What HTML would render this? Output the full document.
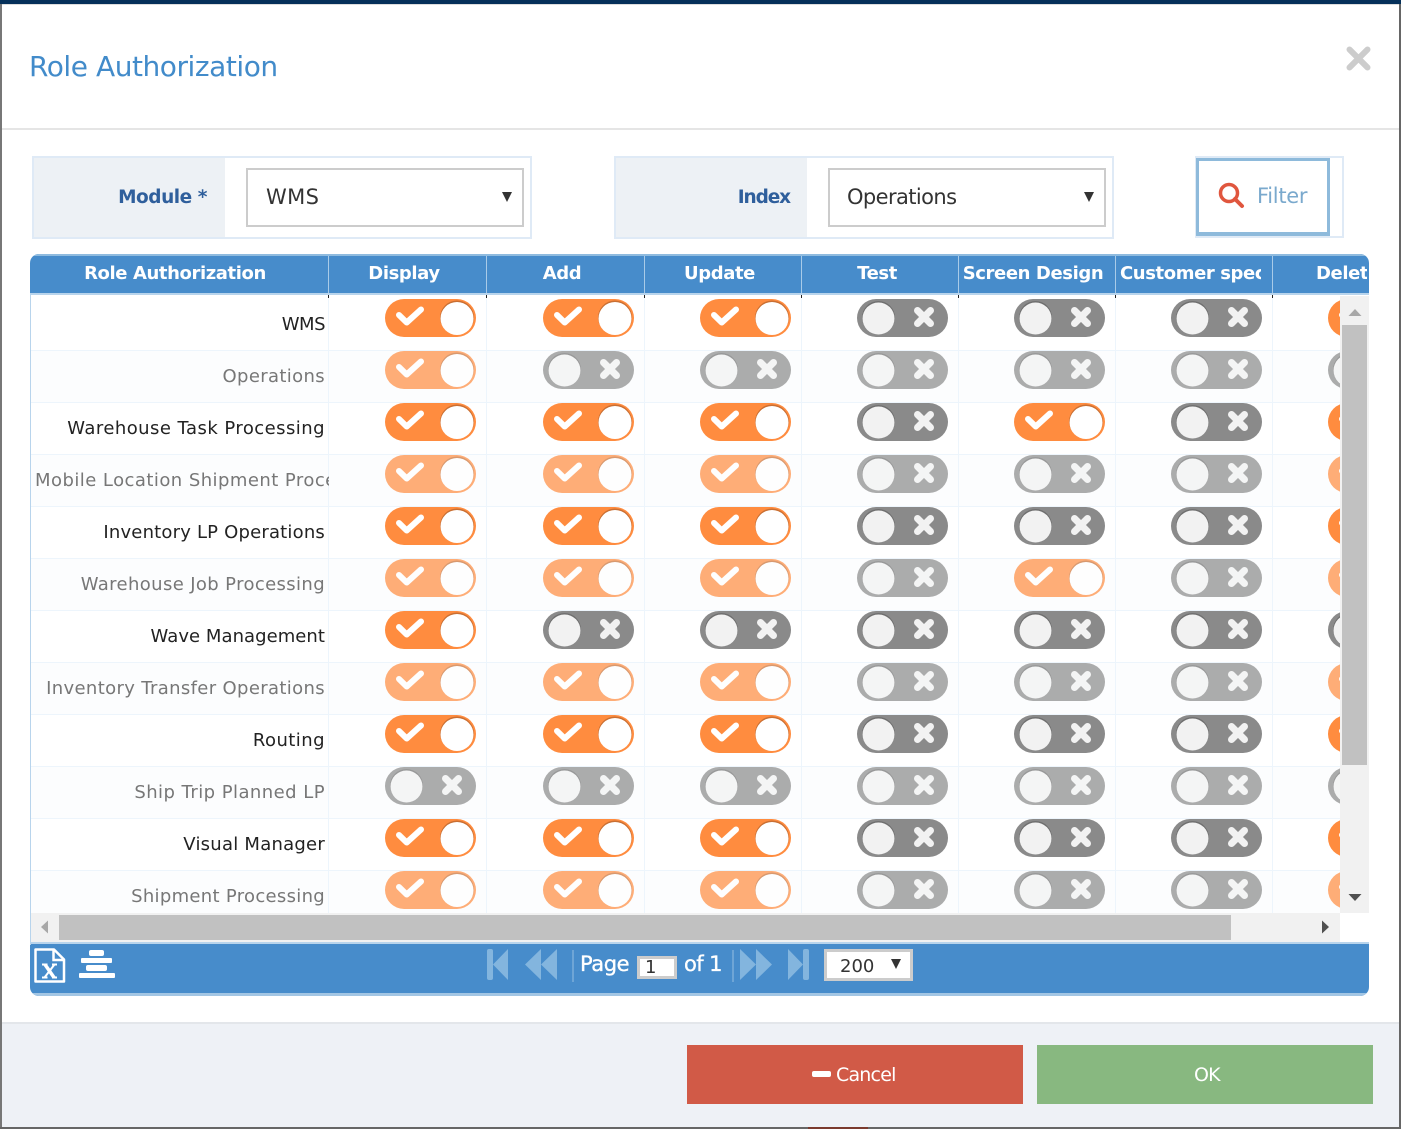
<!DOCTYPE html>
<html><head><meta charset="utf-8"><style>
html,body{margin:0;padding:0}
body{width:1401px;height:1129px;position:relative;overflow:hidden;background:#fff;font-family:"DejaVu Sans","Liberation Sans",sans-serif}
.a{position:absolute;box-sizing:border-box}
.t{position:absolute;white-space:nowrap}
.h{position:absolute;top:256px;height:37px;line-height:35px;color:#fff;font-weight:bold;font-size:18px;text-align:center;white-space:nowrap;overflow:hidden;font-family:"DejaVu Sans",sans-serif;letter-spacing:-.4px}
.v{position:absolute;top:256px;width:1px;height:37px;background:#a9cbe8}
.k{position:absolute;top:295px;width:1px;height:3px;background:#222}
.l{position:absolute;left:30px;width:295px;height:30px;line-height:30px;text-align:right;font-size:18px;white-space:nowrap;letter-spacing:.45px;color:#222}
.f{color:#777}
</style></head><body>
<div class="a" style="left:0;top:0;width:1401px;height:4px;background:#05305a"></div>
<div class="a" style="left:0;top:4px;width:2px;height:1125px;background:#777"></div>
<div class="a" style="left:1399px;top:4px;width:2px;height:1125px;background:#666"></div>
<div class="a" style="left:2px;top:4px;width:1397px;height:1px;background:#ddd"></div>
<div class="a" style="left:2px;top:128px;width:1397px;height:2px;background:#e5e5e5"></div>

<div class="t" style="left:29px;top:48px;font-size:28px;line-height:38px;color:#428bca;font-family:'DejaVu Sans',sans-serif;letter-spacing:-.45px">Role Authorization</div>
<svg class="a" style="left:1345px;top:45px" width="27" height="27"><path d="M4.500 4.500L22.500 22.500M22.500 4.500L4.500 22.500" stroke="#ccc" stroke-width="6" stroke-linecap="round"/></svg>

<!-- Module -->
<div class="a" style="left:32px;top:156px;width:500px;height:83px;border:2px solid #dfeaf6;background:#fff"></div>
<div class="a" style="left:34px;top:158px;width:191px;height:79px;background:#edf1f5"></div>
<div class="t" style="right:1194px;top:183px;line-height:30px;font-size:18.500px;font-weight:bold;color:#2f5f9c;font-family:'DejaVu Sans',sans-serif;letter-spacing:-.45px">Module *</div>
<div class="a" style="left:246px;top:168px;width:278px;height:59px;border:2px solid #ccc;background:#fff"></div>
<div class="t" style="left:266px;top:181px;line-height:32px;font-size:21px;color:#333;letter-spacing:.4px">WMS</div>
<svg class="a" style="left:501px;top:191px" width="12" height="12"><path d="M1 1H11L6 11Z" fill="#333"/></svg>

<!-- Index -->
<div class="a" style="left:614px;top:156px;width:500px;height:83px;border:2px solid #dfeaf6;background:#fff"></div>
<div class="a" style="left:616px;top:158px;width:191px;height:79px;background:#edf1f5"></div>
<div class="t" style="right:611px;top:183px;line-height:30px;font-size:18.500px;font-weight:bold;color:#2f5f9c;font-family:'DejaVu Sans',sans-serif;letter-spacing:-1.100px">Index</div>
<div class="a" style="left:828px;top:168px;width:278px;height:59px;border:2px solid #ccc;background:#fff"></div>
<div class="t" style="left:847px;top:181px;line-height:32px;font-size:21px;color:#333;letter-spacing:-.6px">Operations</div>
<svg class="a" style="left:1083px;top:191px" width="12" height="12"><path d="M1 1H11L6 11Z" fill="#333"/></svg>

<!-- Filter -->
<div class="a" style="left:1195px;top:156px;width:149px;height:82px;border:2px solid #dfeaf6;background:#fff"></div>
<div class="a" style="left:1196px;top:158px;width:134px;height:78px;border:3px solid #8ebadb;border-bottom-width:4px;background:#fff"></div>
<svg class="a" style="left:1217px;top:181px" width="28" height="28"><circle cx="12" cy="12" r="8.500" fill="none" stroke="#e0563e" stroke-width="3.500"/><path d="M18 18L25 25" stroke="#e0563e" stroke-width="4" stroke-linecap="round"/></svg>
<div class="t" style="left:1257px;top:180px;line-height:32px;font-size:21px;color:#7aa9cd;letter-spacing:-.3px">Filter</div>

<!-- Grid -->
<div class="a" style="left:30px;top:254px;width:1339px;height:742px;border-radius:9px;background:#fff;overflow:hidden">
  <div class="a" style="left:0;top:0;width:1339px;height:41px;background:#478ccb;border-top:2px solid #8fbbdf;border-bottom:2px solid #b8d4ec"></div>
  <div class="a" style="left:0;top:688px;width:1339px;height:54px;background:#478ccb;border-top:2px solid #b8d4ec;border-bottom:3px solid #a3c6e4"></div>
  <div class="a" style="left:0;top:41px;width:1px;height:650px;background:#b8d4ec"></div>
</div>
<div class="h" style="left:26px;width:298px">Role Authorization</div>
<div class="h" style="left:325.500px;width:157px">Display</div>
<div class="h" style="left:483.500px;width:157px">Add</div>
<div class="h" style="left:641.500px;width:156px">Update</div>
<div class="h" style="left:799px;width:156px">Test</div>
<div class="h" style="left:955px;width:156px">Screen Design</div>
<div class="h" style="left:1120px;width:141px;text-align:left">Customer specific</div>
<div class="h" style="left:1316px;width:51px;text-align:left">Delete</div>
<div class="v" style="left:328px"></div><div class="v" style="left:486px"></div><div class="v" style="left:644px"></div><div class="v" style="left:801px"></div><div class="v" style="left:958px"></div><div class="v" style="left:1115px"></div><div class="v" style="left:1272px"></div>

<!-- Toggles & grid lines -->
<svg class="a" style="left:31px;top:296px" width="1309" height="617" viewBox="31 296 1309 617">
<defs>
<symbol id="on" width="91" height="38" overflow="visible"><rect width="91" height="38" rx="19" fill="#ff8c3f"/><circle cx="72" cy="18.500" r="17" fill="#c96f33"/><circle cx="72" cy="19.500" r="16.500" fill="#fff"/><path d="M14 16L21.700 23.500L36 10.500" fill="none" stroke="#fff" stroke-width="6" stroke-linecap="round" stroke-linejoin="round"/></symbol>
<symbol id="of" width="91" height="38" overflow="visible"><rect width="91" height="38" rx="19" fill="#8a8a8a"/><circle cx="21.500" cy="18.500" r="16.500" fill="#6f6f6f"/><circle cx="21.500" cy="19.500" r="16" fill="#f2f2f2"/><path d="M60.500 11.500L73.500 24.500M73.500 11.500L60.500 24.500" fill="none" stroke="#f2f2f2" stroke-width="7" stroke-linecap="round"/></symbol>
</defs>
<rect x="31" y="350" width="1309" height="52" fill="#fcfdfe"/><rect x="31" y="454" width="1309" height="52" fill="#fcfdfe"/><rect x="31" y="558" width="1309" height="52" fill="#fcfdfe"/><rect x="31" y="662" width="1309" height="52" fill="#fcfdfe"/><rect x="31" y="766" width="1309" height="52" fill="#fcfdfe"/><rect x="31" y="870" width="1309" height="52" fill="#fcfdfe"/>
<g fill="#edf5fc">
<rect x="31" y="350" width="1309" height="1"/><rect x="31" y="402" width="1309" height="1"/><rect x="31" y="454" width="1309" height="1"/><rect x="31" y="506" width="1309" height="1"/><rect x="31" y="558" width="1309" height="1"/><rect x="31" y="610" width="1309" height="1"/><rect x="31" y="662" width="1309" height="1"/><rect x="31" y="714" width="1309" height="1"/><rect x="31" y="766" width="1309" height="1"/><rect x="31" y="818" width="1309" height="1"/><rect x="31" y="870" width="1309" height="1"/>
<rect x="328" y="296" width="1" height="618"/><rect x="486" y="296" width="1" height="618"/><rect x="644" y="296" width="1" height="618"/><rect x="801" y="296" width="1" height="618"/><rect x="958" y="296" width="1" height="618"/><rect x="1115" y="296" width="1" height="618"/><rect x="1272" y="296" width="1" height="618"/>
</g>
<g transform="translate(0,299)"><use href="#on" x="385"/><use href="#on" x="543"/><use href="#on" x="700"/><use href="#of" x="857"/><use href="#of" x="1014"/><use href="#of" x="1171"/><use href="#on" x="1328"/></g>
<g transform="translate(0,351)" opacity=".7"><use href="#on" x="385"/><use href="#of" x="543"/><use href="#of" x="700"/><use href="#of" x="857"/><use href="#of" x="1014"/><use href="#of" x="1171"/><use href="#of" x="1328"/></g>
<g transform="translate(0,403)"><use href="#on" x="385"/><use href="#on" x="543"/><use href="#on" x="700"/><use href="#of" x="857"/><use href="#on" x="1014"/><use href="#of" x="1171"/><use href="#on" x="1328"/></g>
<g transform="translate(0,455)" opacity=".7"><use href="#on" x="385"/><use href="#on" x="543"/><use href="#on" x="700"/><use href="#of" x="857"/><use href="#of" x="1014"/><use href="#of" x="1171"/><use href="#on" x="1328"/></g>
<g transform="translate(0,507)"><use href="#on" x="385"/><use href="#on" x="543"/><use href="#on" x="700"/><use href="#of" x="857"/><use href="#of" x="1014"/><use href="#of" x="1171"/><use href="#on" x="1328"/></g>
<g transform="translate(0,559)" opacity=".7"><use href="#on" x="385"/><use href="#on" x="543"/><use href="#on" x="700"/><use href="#of" x="857"/><use href="#on" x="1014"/><use href="#of" x="1171"/><use href="#on" x="1328"/></g>
<g transform="translate(0,611)"><use href="#on" x="385"/><use href="#of" x="543"/><use href="#of" x="700"/><use href="#of" x="857"/><use href="#of" x="1014"/><use href="#of" x="1171"/><use href="#of" x="1328"/></g>
<g transform="translate(0,663)" opacity=".7"><use href="#on" x="385"/><use href="#on" x="543"/><use href="#on" x="700"/><use href="#of" x="857"/><use href="#of" x="1014"/><use href="#of" x="1171"/><use href="#on" x="1328"/></g>
<g transform="translate(0,715)"><use href="#on" x="385"/><use href="#on" x="543"/><use href="#on" x="700"/><use href="#of" x="857"/><use href="#of" x="1014"/><use href="#of" x="1171"/><use href="#on" x="1328"/></g>
<g transform="translate(0,767)" opacity=".7"><use href="#of" x="385"/><use href="#of" x="543"/><use href="#of" x="700"/><use href="#of" x="857"/><use href="#of" x="1014"/><use href="#of" x="1171"/><use href="#of" x="1328"/></g>
<g transform="translate(0,819)"><use href="#on" x="385"/><use href="#on" x="543"/><use href="#on" x="700"/><use href="#of" x="857"/><use href="#of" x="1014"/><use href="#of" x="1171"/><use href="#on" x="1328"/></g>
<g transform="translate(0,871)" opacity=".7"><use href="#on" x="385"/><use href="#on" x="543"/><use href="#on" x="700"/><use href="#of" x="857"/><use href="#of" x="1014"/><use href="#of" x="1171"/><use href="#on" x="1328"/></g>
</svg>
<div class="k" style="left:328px"></div><div class="k" style="left:486px"></div><div class="k" style="left:644px"></div><div class="k" style="left:801px"></div><div class="k" style="left:958px"></div><div class="k" style="left:1115px"></div><div class="k" style="left:1272px"></div>

<!-- Labels -->
<div class="l" style="top:310px;letter-spacing:-.5px">WMS</div>
<div class="l f" style="top:362px;letter-spacing:.35px">Operations</div>
<div class="l" style="top:414px">Warehouse Task Processing</div>
<div class="l f" style="top:466px;left:35px;width:294px;overflow:hidden;text-align:left">Mobile Location Shipment Processing</div>
<div class="l" style="top:518px;letter-spacing:.19px">Inventory LP Operations</div>
<div class="l f" style="top:570px;letter-spacing:.37px">Warehouse Job Processing</div>
<div class="l" style="top:622px;letter-spacing:.05px">Wave Management</div>
<div class="l f" style="top:674px;letter-spacing:.35px">Inventory Transfer Operations</div>
<div class="l" style="top:726px">Routing</div>
<div class="l f" style="top:778px">Ship Trip Planned LP</div>
<div class="l" style="top:830px;letter-spacing:.24px">Visual Manager</div>
<div class="l f" style="top:882px;letter-spacing:.3px">Shipment Processing</div>

<!-- Scrollbars -->
<div class="a" style="left:1340px;top:296px;width:29px;height:617px;background:#f1f1f1"></div>
<div class="a" style="left:1342px;top:325px;width:25px;height:440px;background:#c1c1c1"></div>
<svg class="a" style="left:1347px;top:307px" width="16" height="10"><path d="M1.500 9L8 2L14.500 9Z" fill="#a8a8a8"/></svg>
<svg class="a" style="left:1347px;top:893px" width="16" height="10"><path d="M1.500 1L8 8L14.500 1Z" fill="#505050"/></svg>
<div class="a" style="left:31px;top:913px;width:1309px;height:29px;background:#f1f1f1"></div>
<div class="a" style="left:59px;top:915px;width:1172px;height:25px;background:#c1c1c1"></div>
<svg class="a" style="left:39px;top:919px" width="10" height="16"><path d="M9 1.500V14.500L2 8Z" fill="#a8a8a8"/></svg>
<svg class="a" style="left:1321px;top:919px" width="10" height="16"><path d="M1 1.500V14.500L8 8Z" fill="#505050"/></svg>
<div class="a" style="left:1340px;top:913px;width:29px;height:29px;background:#fff"></div>

<!-- Pager -->
<svg class="a" style="left:33px;top:947px" width="34" height="37"><path d="M2.500 2.500H21L31 12.500V34.500H2.500Z" fill="none" stroke="#fff" stroke-width="2.500" stroke-linejoin="round"/><path d="M20.500 3V13H31" fill="none" stroke="#fff" stroke-width="2.500"/><path d="M9 17.500H14.500M19 17.500H24M9 30.500H14.500M19 30.500H24" stroke="#fff" stroke-width="2" fill="none"/><path d="M12 17.500L21 30.500" stroke="#fff" stroke-width="3.500" fill="none"/><path d="M21.500 17.500L11.500 30.500" stroke="#fff" stroke-width="2" fill="none"/></svg>
<svg class="a" style="left:78px;top:948px" width="37" height="32"><g fill="#fff"><rect x="11" y="2" width="15" height="6" rx="2"/><rect x="3" y="10" width="31" height="5" rx="1"/><rect x="8" y="17" width="21" height="6" rx="2"/><rect x="1" y="25" width="36" height="5" rx="1"/></g></svg>
<svg class="a" style="left:485px;top:948px" width="330" height="36"><g fill="#83b5de">
<rect x="2" y="1" width="6" height="31" rx="2"/><path d="M8 16.500L23 1V32Z"/>
<path d="M40 16.500L56 1V32ZM56 16.500L72 1V32Z"/>
<path d="M255 1L271 16.500L255 32ZM271 1L287 16.500L271 32Z"/>
<path d="M303 1L318 16.500L303 32Z"/><rect x="318" y="1" width="6" height="31" rx="2"/></g>
<rect x="87" y="2" width="2" height="32" fill="#6ea5d6"/><rect x="247" y="2" width="2" height="32" fill="#6ea5d6"/></svg>
<div class="t" style="left:580px;top:949px;line-height:30px;font-size:21px;color:#fff;letter-spacing:-.45px;-webkit-text-stroke:.35px #fff">Page</div>
<div class="a" style="left:637px;top:956px;width:40px;height:23px;border:3px solid #ccc;background:#fff;font-size:18px;line-height:18px;color:#333;padding-left:5px">1</div>
<div class="t" style="left:684px;top:949px;line-height:30px;font-size:21px;color:#fff;letter-spacing:-.6px;-webkit-text-stroke:.35px #fff">of 1</div>
<div class="a" style="left:824px;top:949px;width:89px;height:32px;border:3px solid #ccc;background:#fff"></div>
<div class="t" style="left:840px;top:953px;line-height:28px;font-size:18px;color:#333">200</div>
<svg class="a" style="left:890px;top:958px" width="12" height="12"><path d="M1 1H11L6 11Z" fill="#333"/></svg>

<!-- Footer -->
<div class="a" style="left:2px;top:1022px;width:1397px;height:105px;background:#eef1f6;border-top:2px solid #e3e6ea"></div>
<div class="a" style="left:0;top:1127px;width:1401px;height:2px;background:#666"></div>
<div class="a" style="left:808px;top:1127px;width:60px;height:2px;background:#7a3a2e"></div>
<div class="a" style="left:687px;top:1045px;width:336px;height:59px;background:#d15a47"></div>
<div class="a" style="left:812px;top:1071px;width:19px;height:6px;background:#fff;border-radius:2px"></div>
<div class="t" style="left:836px;top:1060px;line-height:30px;font-size:19px;color:#fff;letter-spacing:-.8px">Cancel</div>
<div class="a" style="left:1037px;top:1045px;width:336px;height:59px;background:#88b880"></div>
<div class="t" style="left:1194px;top:1060px;line-height:30px;font-size:19px;color:#fff;letter-spacing:-.8px">OK</div>
</body></html>
